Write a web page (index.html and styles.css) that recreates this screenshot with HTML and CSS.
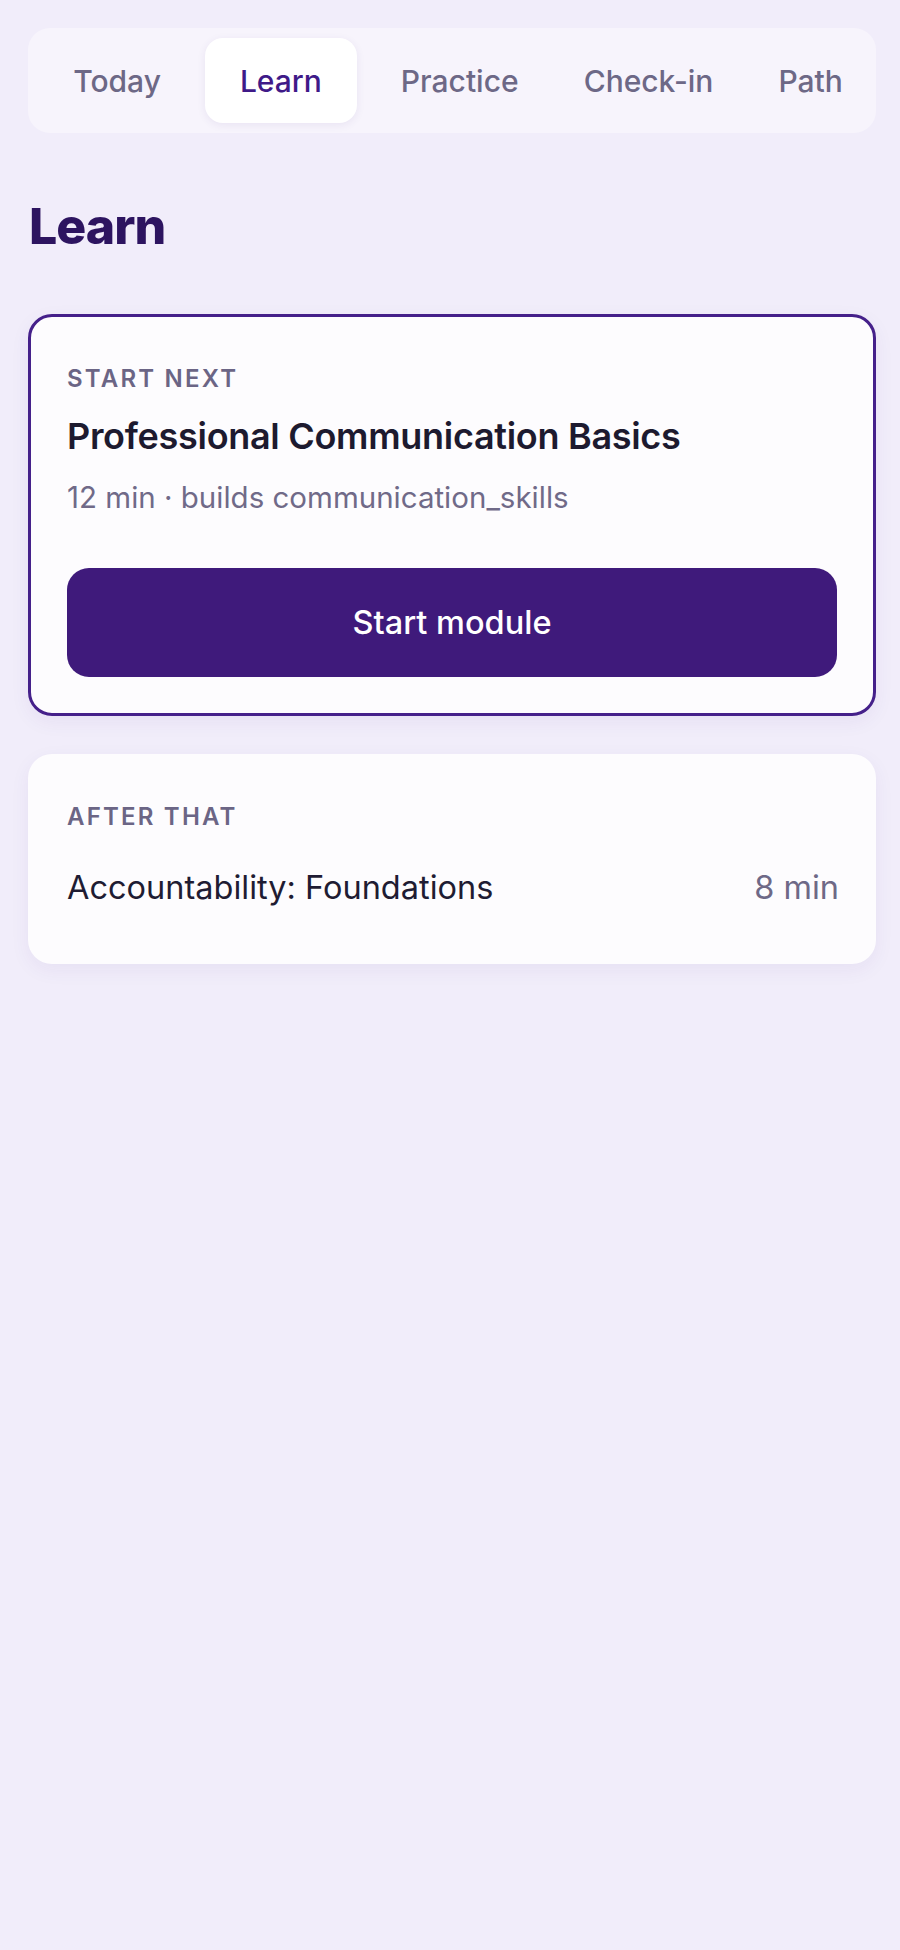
FILE: index.html
```html
<!DOCTYPE html>
<html lang="en">
<head>
<meta charset="utf-8">
<title>Learn</title>
<link rel="stylesheet" href="styles.css">
</head>
<body>
<main class="page">
  <nav class="tabs">
    <a class="tab">Today</a>
    <a class="tab tab-active">Learn</a>
    <a class="tab">Practice</a>
    <a class="tab">Check-in</a>
    <a class="tab">Path</a>
  </nav>

  <h1 class="title">Learn</h1>

  <section class="card card-primary">
    <div class="label">START NEXT</div>
    <h2 class="module-name">Professional Communication Basics</h2>
    <div class="meta">12 min · builds communication_skills</div>
    <button class="btn">Start module</button>
  </section>

  <section class="card card-secondary">
    <div class="label">AFTER THAT</div>
    <div class="row">
      <span class="row-name">Accountability: Foundations</span>
      <span class="row-time">8 min</span>
    </div>
  </section>
</main>
</body>
</html>
```

FILE: styles.css
```css
* { box-sizing: border-box; }

html, body {
  margin: 0;
  padding: 0;
  background: #f1edfa;
}

body {
  font-family: Inter, "Noto Sans", "Liberation Sans", sans-serif;
  min-height: 1950px;
}

.page {
  padding: 28px 24px 0 28px;
  display: flex;
  flex-direction: column;
}

.tabs {
  display: flex;
  justify-content: center;
  gap: 23px;
  background: #f7f4fc;
  border-radius: 22px;
  padding: 10px 4px 10px 16px;
  height: 105px;
}

.tab {
  display: flex;
  align-items: center;
  justify-content: center;
  padding: 0 21px;
  font-size: 30px;
  font-weight: 500;
  color: #6d6886;
  border-radius: 18px;
  white-space: nowrap;
}

.tab-active {
  padding: 0 35px;
  background: #ffffff;
  color: #3f1a88;
  box-shadow: 0 2px 8px rgba(70, 40, 130, 0.08);
}

.title {
  margin: 63px 0 0 1px;
  font-size: 50px;
  line-height: 60px;
  font-weight: 800;
  letter-spacing: -1px;
  color: #2d1460;
}

.card {
  background: #fdfcfe;
  border-radius: 24px;
  box-shadow: 0 6px 20px rgba(70, 40, 130, 0.06);
}

.card-primary {
  margin-top: 58px;
  border: 3px solid #45208a;
  padding: 47px 36px 36px;
  display: flex;
  flex-direction: column;
}

.card-secondary {
  margin-top: 38px;
  padding: 48px 37px 56px 39px;
}

.label {
  font-size: 24px;
  line-height: 30px;
  font-weight: 600;
  letter-spacing: 2.2px;
  color: #6b6585;
}

.module-name {
  margin: 20px 0 0;
  font-size: 36px;
  line-height: 44px;
  font-weight: 600;
  letter-spacing: -0.3px;
  color: #1d1a2f;
}

.meta {
  margin-top: 21px;
  font-size: 29.5px;
  line-height: 36px;
  color: #706a88;
}

.btn {
  margin-top: 53px;
  height: 109px;
  border: none;
  border-radius: 22px;
  background: #3f1a7b;
  color: #ffffff;
  font-family: inherit;
  font-size: 32.5px;
  font-weight: 500;
}

.row {
  margin-top: 36px;
  display: flex;
  justify-content: space-between;
  align-items: baseline;
  font-size: 32.5px;
  line-height: 40px;
}

.row-name { color: #1f1c33; }
.row-time { color: #6e6987; }
```
